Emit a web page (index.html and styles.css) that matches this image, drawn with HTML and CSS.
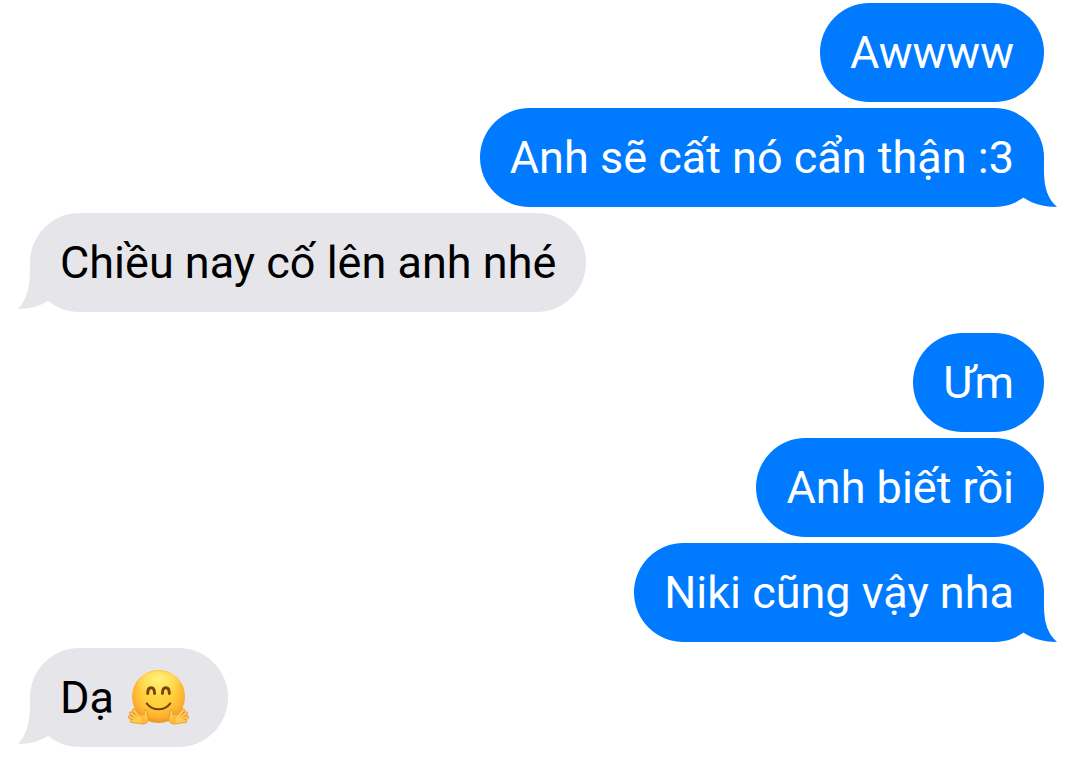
FILE: index.html
```html
<!DOCTYPE html>
<html lang="vi">
  <head>
    <meta charset="UTF-8" />
    <meta name="viewport" content="width=device-width, initial-scale=1.0" />
    <title>Messages</title>
    <link rel="stylesheet" href="styles.css">
  </head>
  <body>
    <main class="chat">
      <div class="group sent">
        <p class="bubble">Awwww</p>
        <p class="bubble">
          Anh sẽ cất nó cẩn thận :3
          <svg class="tail" viewBox="0 0 50 60" aria-hidden="true">
            <path d="M37 10V24C37 41 41 52 50 60C38 60 26 57 17 51L0 30Z" />
          </svg>
        </p>
      </div>

      <div class="group received">
        <p class="bubble">
          Chiều nay cố lên anh nhé
          <svg class="tail" viewBox="0 0 50 60" aria-hidden="true">
            <path d="M12 10V16C12 36 9 47 0 57C12 57 22 54 30 49L50 30Z" />
          </svg>
        </p>
      </div>

      <div class="group sent later">
        <p class="bubble">Ưm</p>
        <p class="bubble">Anh biết rồi</p>
        <p class="bubble">
          Niki cũng vậy nha
          <svg class="tail" viewBox="0 0 50 60" aria-hidden="true">
            <path d="M37 10V24C37 41 41 52 50 60C38 60 26 57 17 51L0 30Z" />
          </svg>
        </p>
      </div>

      <div class="group received">
        <p class="bubble">
          Dạ
          <svg class="emoji" viewBox="0 0 60 60" role="img" aria-label="Hugging face">
            <defs>
              <radialGradient id="face" cx="50%" cy="38%" r="63%">
                <stop offset="0" stop-color="#ffdc48" />
                <stop offset="0.5" stop-color="#ffcd3c" />
                <stop offset="0.8" stop-color="#fdb02e" />
                <stop offset="1" stop-color="#f0901c" />
              </radialGradient>
              <radialGradient id="shine" cx="50%" cy="30%" r="60%">
                <stop offset="0" stop-color="#fff27a" />
                <stop offset="1" stop-color="#fff27a" stop-opacity="0" />
              </radialGradient>
              <!-- Left hand, mirrored for the right one -->
              <g id="palm" fill="none" stroke-linecap="round" stroke-linejoin="round">
                <path d="M17 44V51M12 53L5 43M11 53L2 46M11 54L1 50M12 55L3 54" stroke="#eb9c30" stroke-width="4" />
                <ellipse cx="14" cy="52" rx="6" ry="5" fill="#fdbb3c" stroke="#eb9c30" />
                <path d="M17 44V51M12 52L5 43M11 53L2 46M11 54L1 50M12 55L3 54" stroke="#ffcd50" stroke-width="2" />
              </g>
            </defs>
            <circle cx="30" cy="29" r="27" fill="url(#face)" />
            <ellipse cx="30" cy="17" rx="22" ry="14" fill="url(#shine)" />
            <path d="M19 26C19 18 26 18 26 26M34 26C34 18 41 18 41 26" fill="none" stroke="#76430b" stroke-width="3" stroke-linecap="round" />
            <path d="M18 36C24 44 36 44 42 36" fill="none" stroke="#76430b" stroke-width="2" stroke-linecap="round" />
            <use href="#palm" />
            <use href="#palm" transform="matrix(-1 0 0 1 60 0)" />
          </svg>
          <svg class="tail" viewBox="0 0 50 60" aria-hidden="true">
            <path d="M12 10V16C12 36 9 47 0 57C12 57 22 54 30 49L50 30Z" />
          </svg>
        </p>
      </div>
    </main>
  </body>
</html>
```

FILE: styles.css
```css
* {
  margin: 0;
  padding: 0;
  box-sizing: border-box;
}

body {
  font-family: Roboto, "Liberation Sans", sans-serif;
  font-size: 45px;
  line-height: 59px;
  background: #fff;
}

.chat {
  display: flex;
  flex-direction: column;
  gap: 6px;
  padding: 3px 36px 17px 30px;
}

.group {
  display: flex;
  flex-direction: column;
  gap: 6px;
}

.sent {
  align-items: flex-end;
}

.received {
  align-items: flex-start;
}

/* Pause in the conversation */
.later {
  margin-top: 15px;
}

.bubble {
  position: relative;
  padding: 20px 30px;
  border-radius: 50px;
}

.sent .bubble {
  background: #007aff;
  color: #fff;
}

.received .bubble {
  background: #e5e5ea;
  color: #000;
}

.tail {
  position: absolute;
  bottom: 0;
  width: 50px;
  height: 60px;
}

.sent .tail {
  right: -13px;
  fill: #007aff;
}

.received .tail {
  left: -12px;
  fill: #e5e5ea;
}

.emoji {
  width: 59px;
  height: 59px;
  margin: 0 10px 0 4px;
  vertical-align: top;
  overflow: visible;
}
```
